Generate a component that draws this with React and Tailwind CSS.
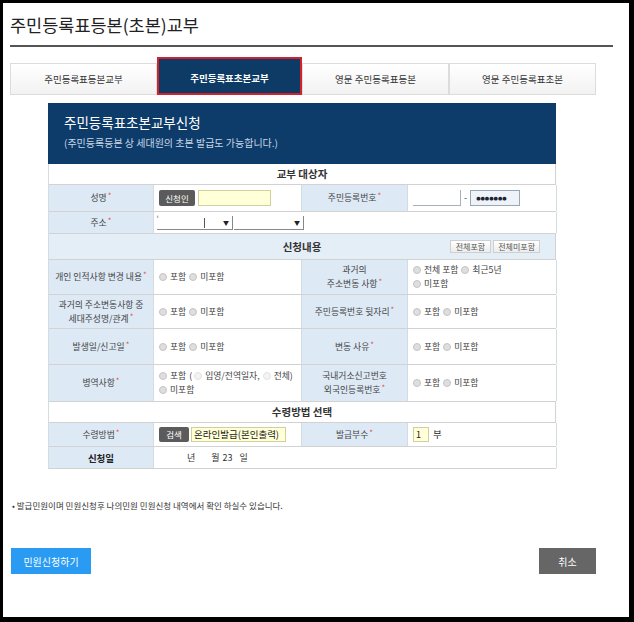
import React from "react";

function Star() {
  return <span className="relative top-[-2px] ml-[1px] text-[8px] leading-[8px] text-[#e2574c]">*</span>;
}

function Radio({ label, faint }) {
  return (
    <span className="mr-[3px] inline-flex items-center gap-[3px] whitespace-nowrap">
      <span
        className={
          faint
            ? "inline-block h-[8px] w-[8px] rounded-full border border-[#e2e2e2] bg-[#f3f3f3]"
            : "inline-block h-[8px] w-[8px] rounded-full border border-[#c4c4c4] bg-[#dedede]"
        }
      />
      {label && <span>{label}</span>}
    </span>
  );
}

function Label({ children, bold }) {
  return (
    <div
      className={`flex items-center justify-center border-r border-[#d3dbe3] bg-[#dde9f5] px-1 text-center leading-[14px] ${
        bold ? "text-[9.5px] font-bold text-[#222]" : ""
      }`}
    >
      <div>{children}</div>
    </div>
  );
}

function Value({ children, className = "" }) {
  return (
    <div className={`flex items-center border-r border-[#d3dbe3] bg-white px-[5px] ${className}`}>
      {children}
    </div>
  );
}

function Row({ h, children }) {
  return (
    <div className={`grid grid-cols-[105px_148px_106px_149px] border-b border-[#d2d2d2] ${h}`}>
      {children}
    </div>
  );
}

function IncludePair() {
  return (
    <div className="flex items-center">
      <Radio label="포함" />
      <Radio label="미포함" />
    </div>
  );
}

function Tab({ children }) {
  return (
    <div className="flex h-[32px] w-[147px] items-center justify-center border border-[#dcdcdc] bg-gradient-to-b from-white to-[#f2f2f2] text-[9.5px] text-[#333]">
      {children}
    </div>
  );
}

export default function App() {
  return (
    <div className="h-[622px] w-[634px] bg-black pb-[5px] pl-[3px] pr-[5px] pt-[3px] font-['Noto_Sans_CJK_KR','Noto_Sans',sans-serif]">
      <div className="flex h-full w-full flex-col bg-white pl-[7px] text-[#333]">
        {/* title */}
        <div className="w-[603px] border-b-2 border-[#555] pb-[8px] pt-[10px] text-[17.5px] leading-[24px] text-[#222]">
          주민등록표등본(초본)교부
        </div>

        {/* tabs */}
        <div className="mt-[10px] flex h-[38px] w-[586px] items-end">
          <Tab>주민등록표등본교부</Tab>
          <div className="flex h-[38px] w-[145px] items-center justify-center border-2 border-[#d0222a] bg-[#0e3a66] pt-[5px] text-[9.5px] font-bold text-white">
            주민등록표초본교부
          </div>
          <Tab>영문 주민등록표등본</Tab>
          <Tab>영문 주민등록표초본</Tab>
        </div>

        {/* form panel */}
        <div className="ml-[38px] mt-[8px] w-[508px] text-[8.8px] text-[#444]">
          <div className="h-[61px] bg-[#0e3c6a] pl-[16px] pt-[10px]">
            <div className="text-[13.5px] leading-[18px] text-white">주민등록표초본교부신청</div>
            <div className="mt-[5px] text-[10px] leading-[14px] text-[#c8d6e6]">
              (주민등록등본 상 세대원의 초본 발급도 가능합니다.)
            </div>
          </div>

          <div className="border-l border-[#d3dbe3]">
            <div className="flex h-[21px] items-center justify-center border-b border-r border-[#d2d2d2] text-[10.5px] font-bold text-[#333]">
              교부 대상자
            </div>

            <Row h="h-[27px]">
              <Label>
                성명<Star />
              </Label>
              <Value className="gap-[3px] px-[3px]">
                <span className="flex h-[16px] w-[36px] items-center justify-center rounded-[2px] bg-[#5b5b5b] text-[8.5px] text-white">
                  신청인
                </span>
                <span className="h-[16px] w-[73px] border border-[#cfcf9f] bg-[#ffffd8]" />
              </Value>
              <Label>
                주민등록번호<Star />
              </Label>
              <Value className="gap-[3px] px-[3px]">
                <span className="h-[16px] w-[48px] border-b border-r border-[#a8b0b8] bg-white" />
                <span className="text-[9px]">-</span>
                <span className="flex h-[16px] w-[50px] items-center border border-[#98a6b6] bg-[#eef3fa] pl-[5px] font-['DejaVu_Sans',sans-serif] text-[5px] leading-[6px] text-[#223]">
                  ●●●●●●●
                </span>
              </Value>
            </Row>

            <div className="grid h-[22px] grid-cols-[105px_403px] border-b border-[#d2d2d2]">
              <Label>
                주소<Star />
              </Label>
              <div className="flex items-center gap-[1px] border-r border-[#d3dbe3] bg-white pl-[3px]">
                <span className="relative flex h-[14px] w-[76px] items-center justify-end border-b border-r border-[#888] pr-[3px] text-[6px] text-[#222]">
                  <span className="absolute left-[0px] top-[-2px] text-[8px] text-[#666]">ˈ</span>
                  <span className="absolute left-[47px] top-[2px] h-[10px] w-px bg-[#555]" />
                  ▼
                </span>
                <span className="flex h-[14px] w-[70px] items-center justify-end border-b border-r border-[#888] pr-[3px] text-[6px] text-[#222]">
                  ▼
                </span>
              </div>
            </div>

            <div className="grid h-[26px] grid-cols-[1fr_auto_1fr] items-center border-b border-r border-[#d2d2d2] bg-[#e4eef7]">
              <div />
              <div className="text-[10.5px] font-bold text-[#333]">신청내용</div>
              <div className="flex justify-end gap-[2px] pr-[15px]">
                <span className="flex h-[13px] items-center border border-[#cfcfcf] bg-gradient-to-b from-white to-[#ececec] px-[5px] text-[8px] text-[#555]">
                  전체포함
                </span>
                <span className="flex h-[13px] items-center border border-[#cfcfcf] bg-gradient-to-b from-white to-[#ececec] px-[4px] text-[8px] text-[#555]">
                  전체미포함
                </span>
              </div>
            </div>

            <Row h="h-[35px]">
              <Label>
                개인 인적사항 변경 내용<Star />
              </Label>
              <Value>
                <IncludePair />
              </Value>
              <Label>
                과거의
                <br />
                주소변동 사항<Star />
              </Label>
              <Value>
                <div className="leading-[14px]">
                  <div className="flex items-center">
                    <Radio label="전체 포함" />
                    <Radio label="최근5년" />
                  </div>
                  <div className="flex items-center">
                    <Radio label="미포함" />
                  </div>
                </div>
              </Value>
            </Row>

            <Row h="h-[34px]">
              <Label>
                과거의 주소변동사항 중
                <br />
                세대주성명/관계<Star />
              </Label>
              <Value>
                <IncludePair />
              </Value>
              <Label>
                주민등록번호 뒷자리<Star />
              </Label>
              <Value>
                <IncludePair />
              </Value>
            </Row>

            <Row h="h-[36px]">
              <Label>
                발생일/신고일<Star />
              </Label>
              <Value>
                <IncludePair />
              </Value>
              <Label>
                변동 사유<Star />
              </Label>
              <Value>
                <IncludePair />
              </Value>
            </Row>

            <Row h="h-[37px]">
              <Label>
                병역사항<Star />
              </Label>
              <Value>
                <div className="leading-[14px]">
                  <div className="flex items-center whitespace-nowrap">
                    <Radio label="포함" />
                    <span className="mr-[2px]">(</span>
                    <Radio label="입영/전역일자," faint />
                    <Radio label="전체)" faint />
                  </div>
                  <div className="flex items-center">
                    <Radio label="미포함" />
                  </div>
                </div>
              </Value>
              <Label>
                국내거소신고번호
                <br />
                외국인등록번호<Star />
              </Label>
              <Value>
                <IncludePair />
              </Value>
            </Row>

            <div className="flex h-[21px] items-center justify-center border-b border-r border-[#d2d2d2] text-[10.5px] font-bold text-[#333]">
              수령방법 선택
            </div>

            <Row h="h-[24px]">
              <Label>
                수령방법<Star />
              </Label>
              <Value className="gap-[2px] px-[3px]">
                <span className="flex h-[15px] w-[30px] items-center justify-center rounded-[2px] bg-[#5b5b5b] text-[8.5px] text-white">
                  검색
                </span>
                <span className="flex h-[15px] w-[95px] items-center border border-[#cfcf9f] bg-[#ffffd8] pl-[2px] text-[9.5px] text-[#222]">
                  온라인발급(본인출력)
                </span>
              </Value>
              <Label>
                발급부수<Star />
              </Label>
              <Value className="gap-[4px] px-[4px]">
                <span className="flex h-[15px] w-[16px] items-center border border-[#cfcf9f] bg-[#ffffd8] pl-[2px] text-[9px] text-[#222]">
                  1
                </span>
                <span className="text-[9.5px] text-[#222]">부</span>
              </Value>
            </Row>

            <div className="grid h-[22px] grid-cols-[105px_403px] border-b border-[#d2d2d2]">
              <Label bold>신청일</Label>
              <div className="flex items-center border-r border-[#d3dbe3] bg-white pl-[33px] text-[9px] text-[#333]">
                <span>년</span>
                <span className="ml-[16px]">월</span>
                <span className="ml-[3px]">23</span>
                <span className="ml-[7px]">일</span>
              </div>
            </div>
          </div>
        </div>

        {/* note */}
        <div className="ml-[2px] mt-[30px] text-[8.5px] leading-[12px] text-[#333]">
          • 발급민원이며 민원신청후 나의민원 민원신청 내역에서 확인 하실수 있습니다.
        </div>

        {/* buttons */}
        <div className="ml-[1px] mt-[37px] flex w-[585px] justify-between">
          <button className="flex h-[26px] w-[80px] items-center justify-center bg-[#2a9bf2] text-[10px] text-white">
            민원신청하기
          </button>
          <button className="flex h-[26px] w-[57px] items-center justify-center bg-[#666] text-[10px] text-white">
            취소
          </button>
        </div>
      </div>
    </div>
  );
}
